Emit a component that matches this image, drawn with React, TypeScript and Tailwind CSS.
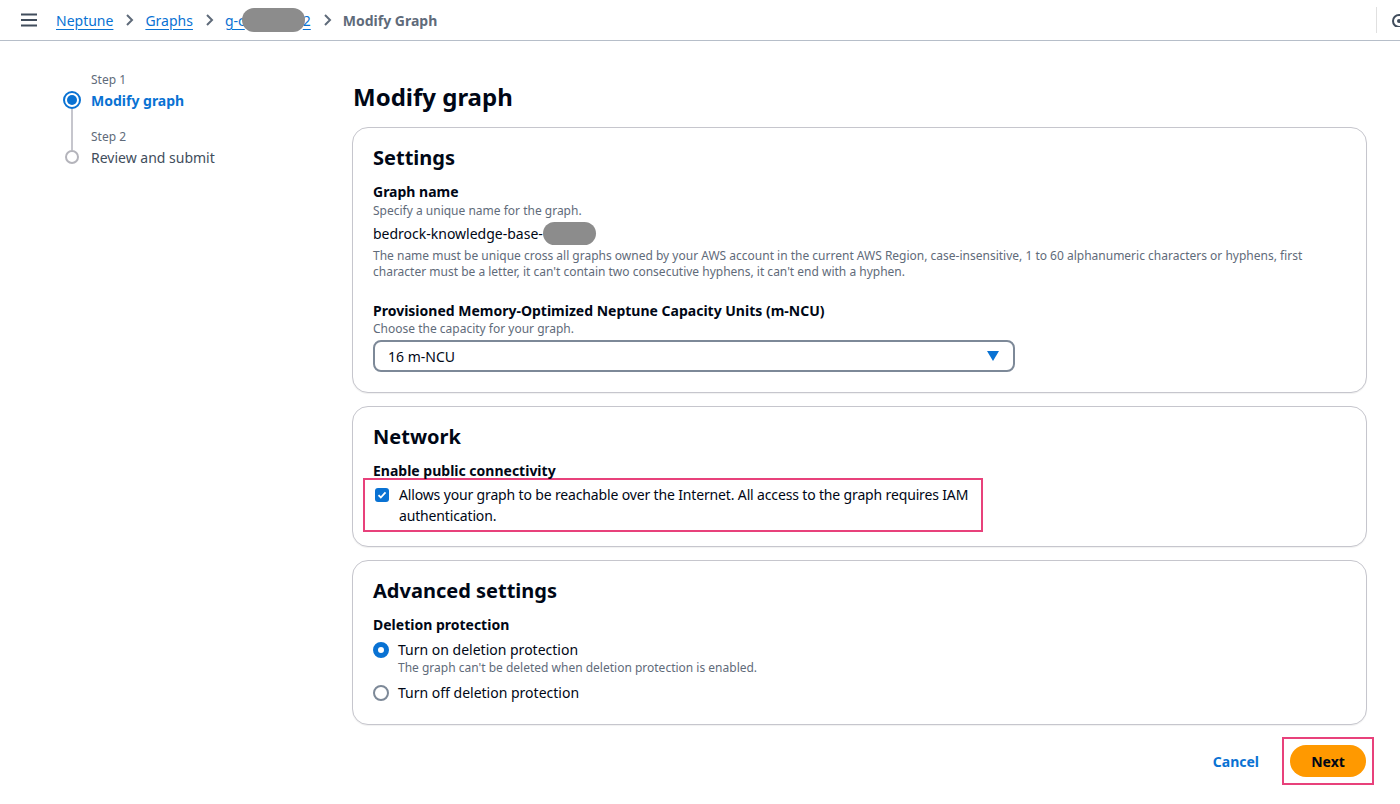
import { useState } from "react";

function Chevron() {
    return (
        <svg width="16" height="16" viewBox="0 0 16 16" className="mx-[8px] text-[#5f6b7a]">
            <path d="M6 3l5 5-5 5" fill="none" stroke="currentColor" strokeWidth="2" />
        </svg>
    );
}

function Blur({ className }: { className: string }) {
    return <span className={"inline-block rounded-full bg-[#8c8c8c] align-middle " + className}></span>;
}

function Card({ title, children, pb = "pb-[20px]" }: { title: string; children: React.ReactNode; pb?: string }) {
    return (
        <div className={"rounded-[16px] border border-[#c6c6cd] bg-white px-[20px] pt-[16px] shadow-[0_1px_1px_rgba(0,7,22,0.06)] " + pb}>
            <h2 className="text-[20px] font-bold leading-[28px] text-[#000716]">{title}</h2>
            <div className="mt-[10px]">{children}</div>
        </div>
    );
}

export default function App() {
    const [publicOn, setPublicOn] = useState(true);
    const [protection, setProtection] = useState("on");

    return (
        <div className="min-h-[804px] bg-white text-[#000716]" style={{ fontFamily: '"Noto Sans", "Open Sans", sans-serif' }}>
            <header className="flex h-[41px] items-center border-b border-[#b6bec9] pl-[20px]">
                <svg width="18" height="14" viewBox="0 0 18 14" className="text-[#414d5c]">
                    <path d="M1 1.5h16M1 7h16M1 12.5h16" stroke="currentColor" strokeWidth="2" />
                </svg>
                <nav className="ml-[18px] flex items-center text-[14px]">
                    <a className="text-[#0972d3] underline underline-offset-[3px]">Neptune</a>
                    <Chevron />
                    <a className="text-[#0972d3] underline underline-offset-[3px]">Graphs</a>
                    <Chevron />
                    <a className="relative text-[#0972d3] underline underline-offset-[3px]">
                        g-c<span className="inline-block w-[58px]"></span>2
                        <span className="absolute left-[17px] top-[-2px] h-[24px] w-[63px] rounded-full bg-[#8c8c8c]"></span>
                    </a>
                    <Chevron />
                    <span className="font-bold text-[#5f6b7a]">Modify Graph</span>
                </nav>
                <div className="flex-grow"></div>
                <div className="h-[26px] w-px bg-[#e0e0e0]"></div>
                <div className="ml-[14px] h-[14px] w-[9px] overflow-hidden">
                    <svg width="16" height="16" viewBox="0 0 16 16" className="text-[#414d5c]">
                        <circle cx="8" cy="8" r="6" fill="none" stroke="currentColor" strokeWidth="2" />
                        <circle cx="8" cy="8" r="2" fill="currentColor" />
                    </svg>
                </div>
            </header>

            <div className="flex">
                <aside className="w-[352px] shrink-0 pl-[63px] pt-[30px]">
                    <div className="flex gap-[10px]">
                        <div className="flex w-[18px] flex-col items-center">
                            <div className="h-[20px]"></div>
                            <div className="flex h-[18px] w-[18px] items-center justify-center rounded-full border-[2px] border-[#0972d3]">
                                <div className="h-[10px] w-[10px] rounded-full bg-[#0972d3]"></div>
                            </div>
                            <div className="h-[41px] w-[2px] bg-[#c6c6cd]"></div>
                            <div className="h-[14px] w-[14px] rounded-full border-[2px] border-[#b4b4bb] bg-white"></div>
                        </div>
                        <div>
                            <div className="text-[12px] leading-[18px] text-[#5f6b7a]">Step 1</div>
                            <div className="mt-[1px] text-[14px] font-bold leading-[22px] text-[#0972d3]">Modify graph</div>
                            <div className="mt-[16px] text-[12px] leading-[18px] text-[#5f6b7a]">Step 2</div>
                            <div className="mt-[1px] text-[14px] leading-[22px] text-[#414d5c]">Review and submit</div>
                        </div>
                    </div>
                </aside>

                <main className="w-[1015px] shrink-0 pt-[45px]">
                    <h1 className="mb-[15px] ml-[1px] mt-[-4px] text-[24px] font-bold leading-[30px]">Modify graph</h1>

                    <div className="flex flex-col gap-[13px]">
                        <Card title="Settings">
                            <div className="text-[14px] font-bold leading-[20px]">Graph name</div>
                            <div className="text-[12px] leading-[17px] text-[#5f6b7a]">Specify a unique name for the graph.</div>
                            <div className="mt-[3px] flex items-center text-[14px] leading-[22px]">
                                bedrock-knowledge-base-
                                <Blur className="h-[23px] w-[53px]" />
                            </div>
                            <p className="mt-[3px] max-w-[940px] text-[12px] leading-[16px] text-[#5f6b7a]">
                                The name must be unique cross all graphs owned by your AWS account in the current AWS Region, case-insensitive, 1 to 60 alphanumeric characters or hyphens, first character must be a letter, it can't contain two consecutive hyphens, it can't end with a hyphen.
                            </p>

                            <div className="mt-[21px] text-[14px] font-bold leading-[20px]">Provisioned Memory-Optimized Neptune Capacity Units (m-NCU)</div>
                            <div className="text-[12px] leading-[16px] text-[#5f6b7a]">Choose the capacity for your graph.</div>
                            <div className="mt-[3px] flex h-[32px] w-[642px] items-center justify-between rounded-[8px] border-[2px] border-[#7d8998] pl-[13px] pr-[14px] text-[14px]">
                                <span>16 m-NCU</span>
                                <svg width="12" height="10" viewBox="0 0 12 10">
                                    <path d="M0 0h12L6 10z" fill="#0972d3" />
                                </svg>
                            </div>
                        </Card>

                        <Card title="Network" pb="pb-[14px]">
                            <div className="text-[14px] font-bold leading-[20px]">Enable public connectivity</div>
                            <div className="ml-[-10px] mr-[363px] mt-[-3px] border-[2px] border-[#e8417b] py-[4px] pl-[10px] pr-[0px]">
                                <label className="flex items-start gap-[10px] text-[14px] leading-[21px]">
                                    <button
                                        onClick={() => setPublicOn(!publicOn)}
                                        className={"mt-[4px] flex h-[14px] w-[14px] shrink-0 items-center justify-center rounded-[3px] " + (publicOn ? "bg-[#0972d3]" : "border-[2px] border-[#7d8998]")}
                                    >
                                        {publicOn && (
                                            <svg width="10" height="10" viewBox="0 0 10 10">
                                                <path d="M1.5 5.2l2.3 2.3L8.5 2.3" fill="none" stroke="white" strokeWidth="1.8" />
                                            </svg>
                                        )}
                                    </button>
                                    <span className="tracking-[-0.15px]">Allows your graph to be reachable over the Internet. All access to the graph requires IAM authentication.</span>
                                </label>
                            </div>
                        </Card>

                        <Card title="Advanced settings">
                            <div className="text-[14px] font-bold leading-[20px]">Deletion protection</div>
                            <div className="mt-[4px] flex flex-col gap-[7px]">
                                <label className="flex items-start gap-[9px]" onClick={() => setProtection("on")}>
                                    <span className={"mt-[3px] h-[16px] w-[16px] shrink-0 rounded-full " + (protection === "on" ? "border-[5px] border-[#0972d3]" : "border-[2px] border-[#7d8998]")}></span>
                                    <span>
                                        <span className="block text-[14px] leading-[22px]">Turn on deletion protection</span>
                                        <span className="block text-[12px] leading-[14px] text-[#5f6b7a]">The graph can't be deleted when deletion protection is enabled.</span>
                                    </span>
                                </label>
                                <label className="flex items-start gap-[9px]" onClick={() => setProtection("off")}>
                                    <span className={"mt-[3px] h-[16px] w-[16px] shrink-0 rounded-full " + (protection === "off" ? "border-[5px] border-[#0972d3]" : "border-[2px] border-[#7d8998]")}></span>
                                    <span className="text-[14px] leading-[22px]">Turn off deletion protection</span>
                                </label>
                            </div>
                        </Card>
                    </div>

                    <div className="mt-[12px] flex items-center justify-end">
                        <button className="mr-[23px] text-[14px] font-bold text-[#0972d3]">Cancel</button>
                        <div className="mr-[-7px] border-[2px] border-[#e8417b] p-[6px]">
                            <button className="h-[32px] w-[76px] rounded-full bg-[#ff9900] text-[14px] font-bold text-[#000716]">Next</button>
                        </div>
                    </div>
                </main>
            </div>
        </div>
    );
}
